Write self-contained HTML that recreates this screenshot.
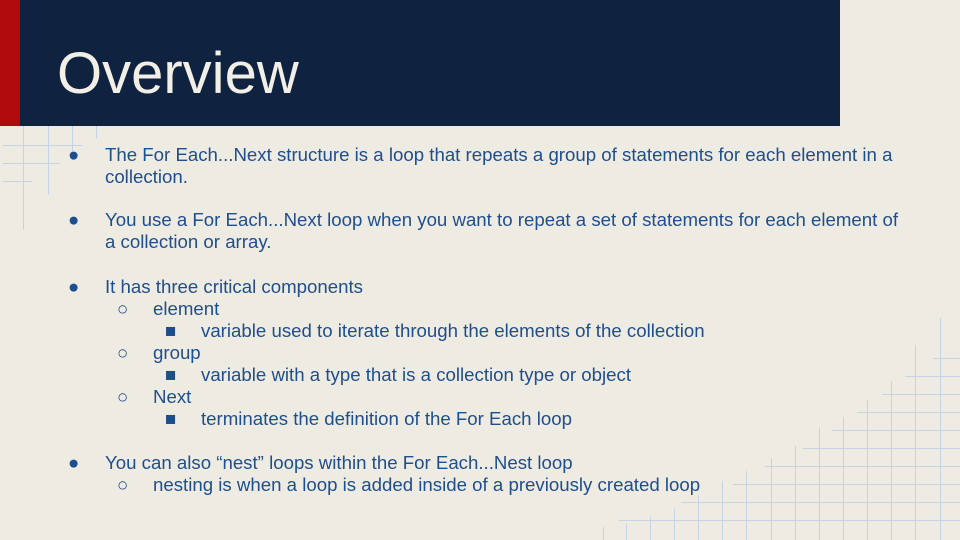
<!DOCTYPE html>
<html><head><meta charset="utf-8"><style>
*{margin:0;padding:0}
body{width:960px;height:540px;background:#eeebe2;position:relative;overflow:hidden;font-family:"Liberation Sans",Arial,sans-serif}
.red{position:absolute;left:0;top:0;width:20px;height:126px;background:#b00a0a}
.hdr{position:absolute;left:20px;top:0;width:820px;height:126px;background:#0f2341}
.title{position:absolute;left:57px;top:38px;font-size:58px;color:#f1efe6;line-height:72px}
.t{position:absolute;font-size:18.65px;color:#1f4e8c;line-height:22px;white-space:nowrap}
.b{font-size:16px}
svg{position:absolute;left:0;top:0}
</style></head><body>
<svg width="960" height="540" stroke="#c5d3e3" stroke-width="1">
<line x1="23.5" y1="126" x2="23.5" y2="230"/><line x1="48.5" y1="126" x2="48.5" y2="194"/><line x1="72.5" y1="126" x2="72.5" y2="160"/><line x1="96.5" y1="126" x2="96.5" y2="138"/>
<line x1="3" y1="145.5" x2="82" y2="145.5"/><line x1="3" y1="163.5" x2="60" y2="163.5"/><line x1="3" y1="181.5" x2="32" y2="181.5"/>
<line x1="603.5" y1="527" x2="603.5" y2="540"/><line x1="626.5" y1="524" x2="626.5" y2="540"/><line x1="650.5" y1="517" x2="650.5" y2="540"/><line x1="674.5" y1="509" x2="674.5" y2="540"/><line x1="698.5" y1="495" x2="698.5" y2="540"/><line x1="722.5" y1="481" x2="722.5" y2="540"/><line x1="746.5" y1="471" x2="746.5" y2="540"/><line x1="771.5" y1="458" x2="771.5" y2="540"/><line x1="795.5" y1="446" x2="795.5" y2="540"/><line x1="819.5" y1="428" x2="819.5" y2="540"/><line x1="843.5" y1="417" x2="843.5" y2="540"/><line x1="867.5" y1="400" x2="867.5" y2="540"/><line x1="891.5" y1="381" x2="891.5" y2="540"/><line x1="915.5" y1="345" x2="915.5" y2="540"/><line x1="940.5" y1="318" x2="940.5" y2="540"/>
<line x1="933" y1="358.5" x2="960" y2="358.5"/><line x1="905" y1="376.5" x2="960" y2="376.5"/><line x1="882" y1="394.5" x2="960" y2="394.5"/><line x1="857" y1="412.5" x2="960" y2="412.5"/><line x1="832" y1="430.5" x2="960" y2="430.5"/><line x1="803" y1="448.5" x2="960" y2="448.5"/><line x1="765" y1="466.5" x2="960" y2="466.5"/><line x1="733" y1="484.5" x2="960" y2="484.5"/><line x1="681" y1="502.5" x2="960" y2="502.5"/><line x1="619" y1="520.5" x2="960" y2="520.5"/>
</svg>
<div class="red"></div><div class="hdr"></div>
<div class="title">Overview</div>
<div class="t" style="left:68px;top:144px">●</div><div class="t" style="left:105px;top:144px">The For Each...Next structure is a loop that repeats a group of statements for each element in a<br>collection.</div>
<div class="t" style="left:68px;top:209px">●</div><div class="t" style="left:105px;top:209px">You use a For Each...Next loop when you want to repeat a set of statements for each element of<br>a collection or array.</div>
<div class="t" style="left:68px;top:276px">●</div><div class="t" style="left:105px;top:276px">It has three critical components</div>
<div class="t" style="left:117px;top:298px">○</div><div class="t" style="left:153px;top:298px">element</div>
<div class="t" style="left:165px;top:320px">■</div><div class="t" style="left:201px;top:320px">variable used to iterate through the elements of the collection</div>
<div class="t" style="left:117px;top:342px">○</div><div class="t" style="left:153px;top:342px">group</div>
<div class="t" style="left:165px;top:364px">■</div><div class="t" style="left:201px;top:364px">variable with a type that is a collection type or object</div>
<div class="t" style="left:117px;top:386px">○</div><div class="t" style="left:153px;top:386px">Next</div>
<div class="t" style="left:165px;top:408px">■</div><div class="t" style="left:201px;top:408px">terminates the definition of the For Each loop</div>
<div class="t" style="left:68px;top:452px">●</div><div class="t" style="left:105px;top:452px">You can also “nest” loops within the For Each...Nest loop</div>
<div class="t" style="left:117px;top:474px">○</div><div class="t" style="left:153px;top:474px">nesting is when a loop is added inside of a previously created loop</div>
</body></html>
